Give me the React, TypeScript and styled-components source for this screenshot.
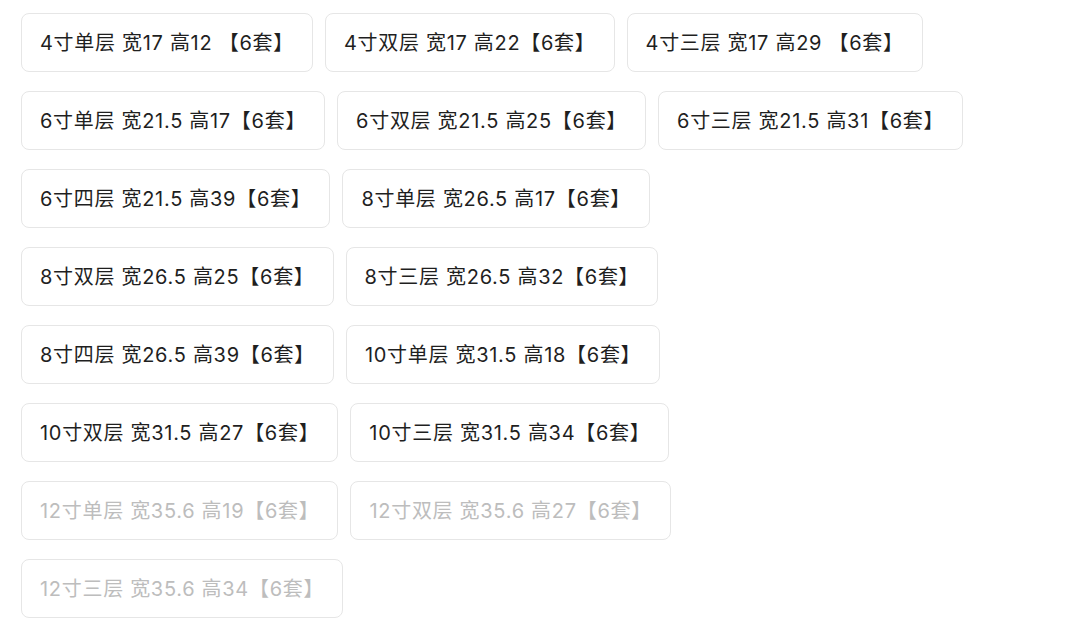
import React from "react";
import styled, { createGlobalStyle } from "styled-components";

const GlobalStyle = createGlobalStyle`
  html, body {
    margin: 0;
    padding: 0;
    background: #ffffff;
  }
  body {
    font-family: Inter, "Noto Sans CJK SC", sans-serif;
  }
`;

export const SpecList = styled.div`
  display: flex;
  flex-wrap: wrap;
  align-items: flex-start;
  column-gap: 12px;
  row-gap: 19px;
  width: 947px;
  padding: 13px 21px;
`;

interface SpecButtonProps {
  $disabled?: boolean;
}

export const SpecButton = styled.button<SpecButtonProps>`
  box-sizing: border-box;
  height: 59px;
  padding: 0 18px;
  border: 1px solid #e6e6e6;
  border-radius: 8px;
  background: #ffffff;
  font-family: inherit;
  font-size: 20px;
  line-height: 28px;
  letter-spacing: 0.7px;
  white-space: pre;
  color: ${(p) => (p.$disabled ? "#bdbdbd" : "#1f1f1f")};
  cursor: ${(p) => (p.$disabled ? "not-allowed" : "pointer")};
`;

interface Spec {
  label: string;
  soldOut?: boolean;
}

const specs: Spec[] = [
  { label: "4寸单层 宽17 高12 【6套】" },
  { label: "4寸双层 宽17 高22【6套】" },
  { label: "4寸三层 宽17 高29 【6套】" },
  { label: "6寸单层 宽21.5 高17【6套】" },
  { label: "6寸双层 宽21.5 高25【6套】" },
  { label: "6寸三层 宽21.5 高31【6套】" },
  { label: "6寸四层 宽21.5 高39【6套】" },
  { label: "8寸单层 宽26.5 高17【6套】" },
  { label: "8寸双层 宽26.5 高25【6套】" },
  { label: "8寸三层 宽26.5 高32【6套】" },
  { label: "8寸四层 宽26.5 高39【6套】" },
  { label: "10寸单层 宽31.5 高18【6套】" },
  { label: "10寸双层 宽31.5 高27【6套】" },
  { label: "10寸三层 宽31.5 高34【6套】" },
  { label: "12寸单层 宽35.6 高19【6套】", soldOut: true },
  { label: "12寸双层 宽35.6 高27【6套】", soldOut: true },
  { label: "12寸三层 宽35.6 高34【6套】", soldOut: true },
];

const App: React.FC = () => (
  <>
    <GlobalStyle />
    <SpecList>
      {specs.map((s) => (
        <SpecButton key={s.label} $disabled={s.soldOut} disabled={s.soldOut}>
          {s.label}
        </SpecButton>
      ))}
    </SpecList>
  </>
);

export default App;
